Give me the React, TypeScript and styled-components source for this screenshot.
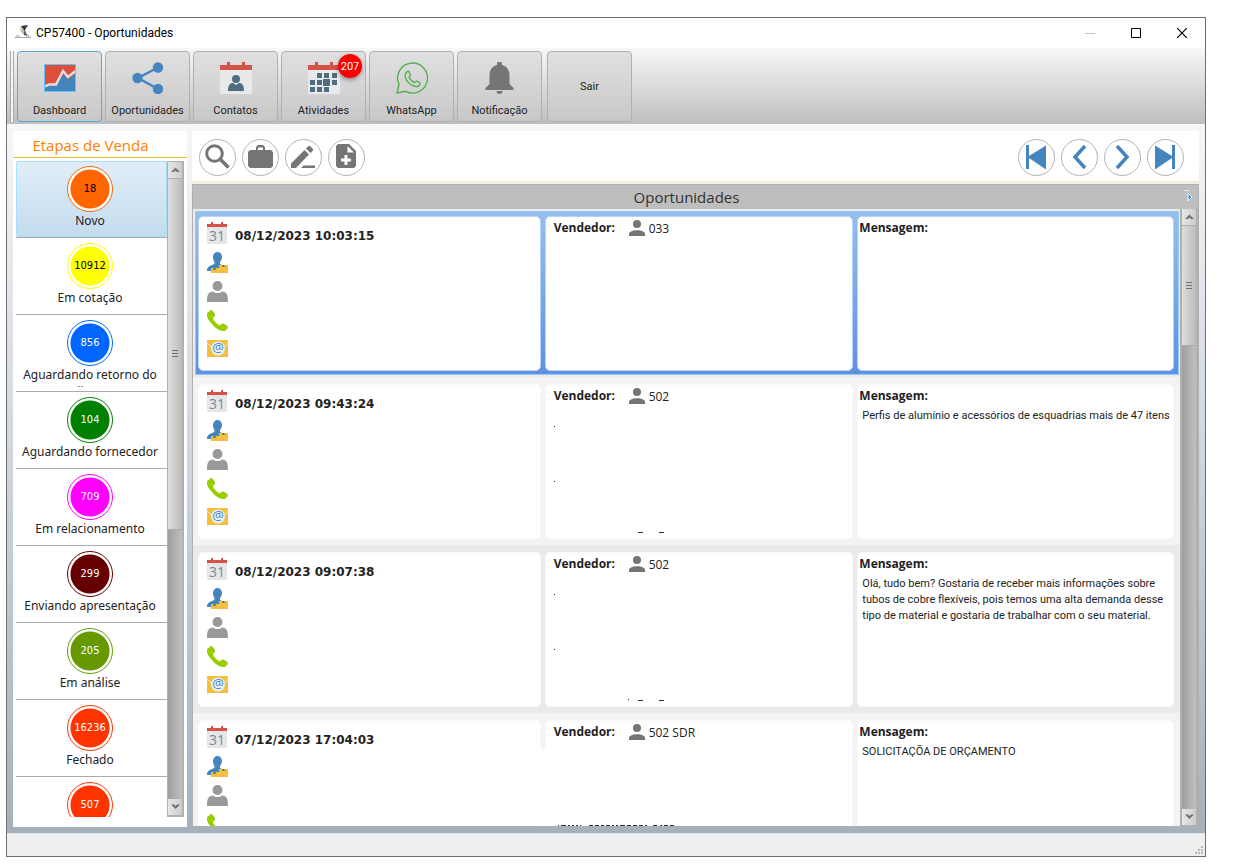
import React from "react";
import styled, { createGlobalStyle, css } from "styled-components";

const humanist = `"Open Sans", "Noto Sans", sans-serif`;
const compact = `Roboto, "Open Sans", sans-serif`;
const stageFont = `"Noto Sans", "DejaVu Sans Condensed", sans-serif`;

const GlobalStyle = createGlobalStyle`
  * { box-sizing: border-box; }
  body { margin: 0; background: #fff; font-family: ${humanist}; color: #222; overflow: hidden; }
  button { font: inherit; color: inherit; padding: 0; border: 0; background: none; }
  ul { list-style: none; margin: 0; padding: 0; }
  h1, h2, p { margin: 0; font-weight: 400; }
  svg { display: block; flex: none; }
`;

const Window = styled.div`
  margin: 17px 29px 9px 6px;
  height: calc(100vh - 26px);
  border: 1px solid #6e6e6e;
  display: flex;
  flex-direction: column;
`;

const TitleBar = styled.header`
  height: 30px;
  flex: none;
  display: flex;
  align-items: center;
  padding-left: 8px;
  gap: 5px;
  font-family: ${compact};
  font-size: 12px;
  color: #000;
`;

const WindowButtons = styled.div`
  margin-left: auto;
  display: flex;
`;

const WindowButton = styled.button`
  width: 46px;
  height: 30px;
  display: flex;
  align-items: center;
  justify-content: center;
`;

const ToolBar = styled.nav`
  height: 76px;
  flex: none;
  display: flex;
  gap: 3px;
  padding: 3px 3px 2px;
  background: linear-gradient(#f8f8f8, #bebebe);
`;

const Gripper = styled.div`
  width: 4px;
  border: solid #aaa;
  border-width: 0 1px;
  background: #f4f4f4;
`;

const ToolButton = styled.button<{ $active?: boolean; $apart?: boolean }>`
  position: relative;
  width: 85px;
  height: 71px;
  margin-left: ${(p) => (p.$apart ? 2 : 0)}px;
  border: 1px solid ${(p) => (p.$active ? "#5aa9dd" : "#b0b0b0")};
  border-radius: 4px;
  background: linear-gradient(#e0e0e0, #c8c8c8);
  display: flex;
  flex-direction: column;
  align-items: center;
  justify-content: ${(p) => (p.$apart ? "center" : "flex-start")};
  gap: 9px;
  padding-top: ${(p) => (p.$apart ? 0 : 10)}px;
  font-family: ${compact};
  font-size: 11px;
  line-height: 16px;
`;

const Badge = styled.span`
  position: absolute;
  top: 2px;
  right: 3px;
  width: 24px;
  height: 24px;
  border-radius: 50%;
  background: #f00;
  color: #fff;
  line-height: 25px;
  font-size: 11px;
  box-shadow: 0 2px 4px rgba(0, 0, 0, 0.35);
`;

const Workspace = styled.div`
  flex: 1;
  min-height: 0;
  display: flex;
  gap: 5px;
  padding: 7px 6px 6px;
  background: linear-gradient(#f5f6f8, #a4b1bc);
`;

const SideBar = styled.aside`
  width: 174px;
  flex: none;
  background: #fff;
  display: flex;
  flex-direction: column;
  padding-bottom: 10px;
`;

const SideTitle = styled.h2`
  height: 27px;
  padding-right: 19px;
  border-bottom: 1px solid #f6bf26;
  text-align: center;
  color: #ff8000;
  font-size: 15px;
  line-height: 29px;
`;

const SideBody = styled.div`
  flex: 1;
  min-height: 0;
  display: flex;
  padding: 3px 3px 0;
`;

const StageList = styled.ul`
  flex: 1;
  overflow: hidden;
`;

const StageItem = styled.li`
  border-bottom: 1px solid #aaa;
`;

const StageButton = styled.button<{ $selected?: boolean }>`
  width: 100%;
  height: 76px;
  padding: 4px 3px 0 0;
  display: flex;
  flex-direction: column;
  align-items: center;
  border: 1px solid transparent;
  ${(p) =>
    p.$selected &&
    css`
      border-color: #a6e0fa;
      border-radius: 2px;
      background: linear-gradient(#e0edf7, #c4dcef);
    `}
`;

const Ring = styled.span<{ $color: string; $dark?: boolean }>`
  width: 46px;
  height: 46px;
  flex: none;
  border-radius: 50%;
  border: 1px solid ${(p) => p.$color};
  background: radial-gradient(circle, ${(p) => p.$color} 19px, #fff 20px);
  color: ${(p) => (p.$dark ? "#000" : "#fff")};
  font-family: "DejaVu Sans Condensed", "DejaVu Sans", sans-serif;
  font-size: 11px;
  line-height: 44px;
`;

const StageLabel = styled.span`
  width: 140px;
  height: 21px;
  overflow: hidden;
  font-family: ${stageFont};
  font-size: 12px;
  line-height: 17px;
`;

const ScrollTrack = styled.div<{ $framed?: boolean }>`
  width: ${(p) => (p.$framed ? 17 : 18)}px;
  flex: none;
  display: flex;
  flex-direction: column;
  border: solid #b0b0b0;
  border-width: ${(p) => (p.$framed ? "1px 2px 1px 1px" : "0 2px")};
  background: linear-gradient(90deg, #9e9e9e, #c0c0c0);
`;

const ScrollButton = styled.button`
  height: 17px;
  flex: none;
  display: flex;
  align-items: center;
  justify-content: center;
  border-bottom: 1px solid #b0b0b0;
  background: linear-gradient(90deg, #e6e6e6, #cdcdcd);
`;

const ScrollThumb = styled.div<{ $share: number }>`
  flex: ${(p) => p.$share};
  display: flex;
  align-items: center;
  justify-content: center;
  border-bottom: 1px solid #aaa;
  background: linear-gradient(90deg, #dedede, #bcbcbc);
`;

const ScrollRest = styled.div<{ $share: number }>`
  flex: ${(p) => p.$share};
`;

const Main = styled.main`
  flex: 1;
  min-width: 0;
  display: flex;
  flex-direction: column;
`;

const ActionBar = styled.div`
  height: 51px;
  flex: none;
  display: flex;
  align-items: center;
  gap: 6px;
  padding: 2px 15px 0 7px;
  background: #fff;
  border-bottom: 1px solid #fbe6bd;
`;

const Pager = styled.div`
  display: flex;
  gap: 6px;
  margin-left: auto;
`;

const RoundButton = styled.button`
  width: 37px;
  height: 37px;
  display: flex;
  align-items: center;
  justify-content: center;
  border: 1px solid #b4b4b4;
  border-radius: 50%;
  background: #fff;
`;

const Grid = styled.section`
  flex: 1;
  min-height: 0;
  display: flex;
  flex-direction: column;
  margin-top: 2px;
  border: 1px solid #b0b0b0;
`;

const GridHead = styled.div`
  height: 24px;
  flex: none;
  position: relative;
  background: #bebebe;
`;

const GridTitle = styled.h1`
  font-size: 15px;
  line-height: 24px;
  text-align: center;
  padding-right: 18px;
  color: #333;
`;

const Expand = styled.button`
  position: absolute;
  right: 5px;
  top: 4px;
`;

const GridBody = styled.div`
  flex: 1;
  min-height: 0;
  display: flex;
`;

const Records = styled.ul`
  flex: 1;
  min-width: 0;
  overflow: hidden;
  background: #f3f3f3;
`;

const Record = styled.li`
  height: 168px;
  padding: 2px 1px 2px 2px;
  background: #f3f3f3;
  &:nth-child(odd) { background: #eaeaea; }
`;

const Cards = styled.div<{ $selected?: boolean }>`
  height: 164px;
  display: grid;
  grid-template-columns: 343fr 309fr 317fr;
  gap: 4px;
  padding: 4px 4px 3px 2px;
  border: 1px solid transparent;
  ${(p) =>
    p.$selected &&
    css`
      border-color: #8fd0fb;
      background: linear-gradient(#96bfee, #6090df);
    `}
`;

const Card = styled.div<{ $selected?: boolean }>`
  position: relative;
  min-width: 0;
  border-radius: 5px;
  background: #fff;
  border: 1px solid ${(p) => (p.$selected ? "#b5d4f8" : "#fafafa")};
`;

const ContactCard = styled(Card)`
  padding: 5px 0 0 8px;
  display: flex;
  flex-direction: column;
  gap: 8px;
`;

const DateLine = styled.div`
  display: flex;
  align-items: center;
  gap: 8px;
  height: 22px;
`;

const DateText = styled.span`
  padding-top: 6px;
  font-family: "DejaVu Sans", sans-serif;
  font-weight: 700;
  font-size: 12px;
`;

const SellerCard = styled(Card)`
  padding: 1px 0 0 8px;
`;

const SellerLine = styled.div`
  display: flex;
  align-items: center;
  height: 20px;
  font-size: 12px;
`;

const FieldName = styled.span`
  display: block;
  font-weight: 700;
  font-size: 12px;
  line-height: 22px;
`;

const SellerName = styled(FieldName)`
  width: 75px;
`;

const SellerId = styled.span`
  margin-left: 4px;
`;

const MessageCard = styled(Card)`
  padding: 0 0 0 1px;
`;

const Message = styled.p`
  padding: 1px 0 0 3px;
  font-family: ${compact};
  font-size: 11px;
  line-height: 16px;
`;

const Fragments = styled.svg`
  position: absolute;
  left: 0;
  top: 0;
`;

const Blank = styled.div`
  position: absolute;
  left: -8px;
  top: 28px;
  width: 16px;
  height: 76px;
  background: #fff;
`;

const StatusBar = styled.footer`
  height: 23px;
  flex: none;
  display: flex;
  justify-content: flex-end;
  align-items: flex-end;
  padding: 2px;
  background: #efefef;
  border-top: 1px solid #dfe3e6;
`;

const blue = "#4485bf";
const grey = "#757575";
const slate = "#4f6d80";
const red = "#d35346";

const LogoIcon = () => (
  <svg width="16" height="16" viewBox="0 0 16 16">
    <path d="M6 1l7-1-3 5 2 5z" fill="#2f3a44" />
    <path d="M5 1l1 6 4 4-1-6z" fill="#cdbb93" />
    <path d="M9 6l4 5-4-1z" fill="#555" />
    <path d="M0 12.500h16M1 11h4M11 11h4" stroke="#8b8b8b" strokeDasharray="1.500 .6" />
  </svg>
);

const DashboardIcon = () => (
  <svg width="32" height="32" viewBox="0 0 32 32">
    <path d="M.5 2.500h31v27H.5z" fill="#dd4f3b" />
    <path d="M.5 29.500v-4l4-2 7-1 8-10 5 5 7-7v19z" fill={blue} />
    <path d="M1 24.500l4-2h7l7-13.500 5 6 7.500-6" fill="none" stroke="#dedede" strokeWidth="2.500" />
    <path d="M.5 2.500h31v27H.5z" fill="none" stroke="#5cc8fa" />
  </svg>
);

const ShareIcon = () => (
  <svg width="32" height="32" viewBox="0 0 32 32">
    <path d="M26 5.500L6 16l20 11" fill="none" stroke={blue} strokeWidth="2.500" />
    <circle cx="26" cy="5.500" r="5.200" fill={blue} />
    <circle cx="5.500" cy="16" r="5.200" fill={blue} />
    <circle cx="26" cy="27" r="5.200" fill={blue} />
  </svg>
);

const ContactsIcon = () => (
  <svg width="32" height="32" viewBox="0 0 32 32">
    <path d="M0 8h32v24H0z" fill="#e9e9e9" />
    <path d="M0 3h7V0h3v3h12V0h3v3h7v5H0z" fill={red} />
    <circle cx="16" cy="17" r="4" fill={slate} />
    <path d="M8 29c0-6 2-8 5-8l3 2 3-2c3 0 5 2 5 8z" fill={slate} />
  </svg>
);

const ActivitiesIcon = () => (
  <svg width="32" height="32" viewBox="0 0 32 32">
    <path d="M0 8h32v24H0z" fill="#e9e9e9" />
    <path d="M0 3h7V0h3v3h12V0h3v3h7v5H0z" fill={red} />
    <path
      d="M9 11h5v5H9zM16 11h5v5h-5zM24 11h5v5h-5zM2 18h5v5H2zM9 18h5v5H9zM15 17h7v7h-7zM24 18h5v5h-5zM2 25h5v5H2zM9 25h5v5H9zM16 25h5v5h-5z"
      fill={slate}
    />
  </svg>
);

const WhatsIcon = () => (
  <svg width="32" height="32" viewBox="0 0 32 32" fill="none" stroke="#53b04b" strokeWidth="1.400" strokeLinejoin="round">
    <path d="M1 31l2-8.500A15 15 0 1 1 9.500 29.300z" />
    <path d="M12 9.200c.6 0 1 .2 1.300 1l1 2.700c.2.800-.2 1.300-1.300 2.500 1.400 2.600 3 4 5.600 5.100 1-1.200 1.500-1.700 2.300-1.300l2.500 1.300c.8.500.8 1 .5 1.800-.8 2-3 2.500-4.600 2.100-4.800-1.300-8.700-4.900-10-9.300-.5-2.200.400-5.300 2.700-5.900z" />
  </svg>
);

const BellIcon = () => (
  <svg width="32" height="32" viewBox="0 0 32 32" fill="#757575">
    <path d="M13 3V2a2.500 2.500 0 0 1 5 0v1C22.500 4 25.500 8 25.500 13v9l4 4v2h-28v-2l4-4v-9c0-5 3-9 7.500-10zM12.500 29h6a3 3 0 0 1-6 0z" />
  </svg>
);

const SearchIcon = () => (
  <svg width="26" height="26" viewBox="0 0 26 26" fill="none" stroke={grey}>
    <circle cx="9.500" cy="9.500" r="7.800" strokeWidth="3" />
    <path d="M15 15l8.500 8.500" strokeWidth="3.600" />
  </svg>
);

const CaseIcon = () => (
  <svg width="26" height="26" viewBox="0 0 26 26" fill={grey}>
    <path
      fillRule="evenodd"
      d="M2 6h6V3l2-2h5l2 2v3h6l2 2v14l-2 2H2l-2-2V8zM10 6h5V3.500h-5z"
    />
  </svg>
);

const PencilIcon = () => (
  <svg width="26" height="26" viewBox="0 0 26 26" fill={grey}>
    <path d="M0 19.500L13.500 6 18 10.500 5 24H0zM15 4.500l2.500-2.500h1.500l3 3v1.500L19.500 9zM10 24l2.500-2.500H24V24z" />
  </svg>
);

const FileAddIcon = () => (
  <svg width="26" height="26" viewBox="0 0 26 26">
    <path d="M4 0h11l7 7v15l-2 2H4l-2-2V2z" fill={grey} />
    <path d="M13.500 2v6.500H20zM10.500 11h3v3.500H17v3h-3.500V21h-3v-3.500H7v-3h3.500z" fill="#fff" />
  </svg>
);

const pagerShapes: Record<string, React.ReactNode> = {
  Primeiro: <path d="M2 1h3v11L22 1.500v24L5 14v11H2z" fill={blue} />,
  Anterior: <path d="M18 2L8 13l10 11" fill="none" stroke={blue} strokeWidth="3.500" />,
  "Próximo": <path d="M7 2l10 11L7 24" fill="none" stroke={blue} strokeWidth="3.500" />,
  "Último": <path d="M22 1h-3v11L2 1.500v24L19 14v11h3z" fill={blue} />,
};

const CalendarIcon = () => (
  <svg width="20" height="22" viewBox="0 0 20 22">
    <path d="M0 5h20v17H0z" fill="#e6e6e6" />
    <path d="M0 2h4V0h2v2h8V0h2v2h4v3H0z" fill={red} />
    <text x="10" y="19" textAnchor="middle" fontSize="14" fontFamily="Open Sans" fill="#7089a0">31</text>
  </svg>
);

const ClientIcon = () => (
  <svg width="21" height="21" viewBox="0 0 21 21">
    <path d="M6 5c0-3 2-5 4.500-5S15 2 15 5c0 2-1 4-2 5v2l4 2v5H0c0-4 2-5 7.500-7v-2C6.500 9 6 7 6 5z" fill={blue} />
    <path d="M12 13h9v8h-9zM4 16h8v5H4z" fill="#f4bf3d" />
    <path d="M15.500 13h2v2h-2zM6.500 16h2v2h-2z" fill={slate} />
  </svg>
);

const PersonIcon = () => (
  <svg width="21" height="21" viewBox="0 0 21 21" fill="#999">
    <circle cx="10.500" cy="5" r="5" />
    <path d="M0 21c0-7 1-10 6-10.500 2.500 2 6.500 2 9 0 5 .5 6 3.500 6 10.500z" />
  </svg>
);

const PhoneIcon = () => (
  <svg width="21" height="21" viewBox="0 0 21 21">
    <path d="M0 3l4-3c1.500 0 3.500 2.500 4 4.500.3 1.500-.8 2-2.300 3.500 1 3 4 6 7 7.500 1.500-1.500 2.300-2.300 3.500-2 2 .8 4.300 2 4.800 3.800 0 1-2 2.700-3 3.700-5 .5-10.500-3-14-8C1 9.500-.8 6 0 3z" fill="#98ce00" />
  </svg>
);

const MailIcon = () => (
  <svg width="21" height="19" viewBox="0 0 21 19">
    <path d="M0 1h21v17H0z" fill="#f4bf3d" />
    <path d="M0 4l4 4 3-4h8l3 4 3-4" fill="none" stroke="#fbe7b5" />
    <circle cx="11" cy="9.500" r="7" fill="#e9eef2" />
    <text x="11" y="13" textAnchor="middle" fontSize="13" fontFamily="Open Sans" fill="#3f86c6">@</text>
  </svg>
);

const SellerIcon = () => (
  <svg width="16" height="16" viewBox="0 0 16 16" fill="#757575">
    <circle cx="8" cy="4" r="4" />
    <path d="M0 16v-2c0-5 16-5 16 0v2z" />
  </svg>
);

const Chevron = ({ down }: { down?: boolean }) => (
  <svg width="9" height="6" viewBox="0 0 9 6">
    <path d={down ? "M0 .5h3l1.500 1.500L6 .5h3L4.500 5z" : "M0 5h3l1.500-1.500L6 5h3L4.500 .5z"} fill="#707070" />
  </svg>
);

const ScrollBar = ({ thumb, rest, framed }: { thumb: number; rest: number; framed?: boolean }) => (
  <ScrollTrack $framed={framed}>
    <ScrollButton aria-label="Rolar para cima"><Chevron /></ScrollButton>
    <ScrollThumb $share={thumb}>
      <svg width="6" height="8" viewBox="0 0 6 8">
        <path d="M0 .5h6M0 3.500h6M0 6.500h6" stroke="#707070" />
      </svg>
    </ScrollThumb>
    <ScrollRest $share={rest} />
    <ScrollButton aria-label="Rolar para baixo"><Chevron down /></ScrollButton>
  </ScrollTrack>
);

const tools = [
  { label: "Dashboard", icon: <DashboardIcon />, active: true },
  { label: "Oportunidades", icon: <ShareIcon /> },
  { label: "Contatos", icon: <ContactsIcon /> },
  { label: "Atividades", icon: <ActivitiesIcon />, badge: "207" },
  { label: "WhatsApp", icon: <WhatsIcon /> },
  { label: "Notificação", icon: <BellIcon /> },
];

const stages = [
  { count: "18", label: "Novo", color: "#ff6600", dark: true },
  { count: "10912", label: "Em cotação", color: "#ffff00", dark: true },
  { count: "856", label: "Aguardando retorno do cliente", color: "#0066ff" },
  { count: "104", label: "Aguardando fornecedor", color: "#008000" },
  { count: "709", label: "Em relacionamento", color: "#ff00ff" },
  { count: "299", label: "Enviando apresentação", color: "#660000" },
  { count: "205", label: "Em análise", color: "#669900" },
  { count: "16236", label: "Fechado", color: "#ff3300" },
  { count: "507", label: "", color: "#ff3300" },
];

const records = [
  { date: "08/12/2023 10:03:15", seller: "033", message: "", marks: "" },
  {
    date: "08/12/2023 09:43:24",
    seller: "502",
    message: "Perfis de alumínio e acessórios de esquadrias mais de 47 itens",
    marks: "M8 41.500h1M8 96.500h1M92 147.500h5M113 147.500h5",
  },
  {
    date: "08/12/2023 09:07:38",
    seller: "502",
    message:
      "Olá, tudo bem? Gostaria de receber mais informações sobre tubos de cobre flexíveis, pois temos uma alta demanda desse tipo de material e gostaria de trabalhar com o seu material.",
    marks: "M8 41.500h1M8 96.500h1M82 146.500h1M92 147.500h5M113 147.500h5",
  },
  {
    date: "07/12/2023 17:04:03",
    seller: "502 SDR",
    message: "SOLICITAÇÕA DE ORÇAMENTO",
    marks:
      "M12 104.500h1M15 104.500h5M22 104.500h2M26 104.500h2M30 104.500h2M34 104.500h1M43 104.500h4M49 104.500h4M55 104.500h3M60 104.500h4M66 104.500h2M70 104.500h2M74 104.500h5M81 104.500h4M87 104.500h4M93 104.500h4M99 104.500h2M107 104.500h4M114 104.500h2M118 104.500h4M124 104.500h4",
    cut: true,
  },
];

export default function App() {
  return (
    <>
      <GlobalStyle />
      <Window>
        <TitleBar>
          <LogoIcon />
          <span>CP57400 - Oportunidades</span>
          <WindowButtons>
            <WindowButton aria-label="Minimizar">
              <svg width="10" height="10"><path d="M0 5.500h10" stroke="#c4c4c4" /></svg>
            </WindowButton>
            <WindowButton aria-label="Maximizar">
              <svg width="10" height="10"><path d="M.5 .5h9v9h-9z" fill="none" stroke="#000" /></svg>
            </WindowButton>
            <WindowButton aria-label="Fechar">
              <svg width="10" height="10"><path d="M0 0l10 10M10 0L0 10" stroke="#000" strokeWidth="1.200" /></svg>
            </WindowButton>
          </WindowButtons>
        </TitleBar>

        <ToolBar>
          <Gripper />
          {tools.map((t) => (
            <ToolButton key={t.label} $active={t.active}>
              {t.icon}
              {t.label}
              {t.badge && <Badge>{t.badge}</Badge>}
            </ToolButton>
          ))}
          <ToolButton $apart>Sair</ToolButton>
        </ToolBar>

        <Workspace>
          <SideBar>
            <SideTitle>Etapas de Venda</SideTitle>
            <SideBody>
              <StageList>
                {stages.map((s, i) => (
                  <StageItem key={s.count}>
                    <StageButton $selected={i === 0}>
                      <Ring $color={s.color} $dark={s.dark}>{s.count}</Ring>
                      <StageLabel>{s.label}</StageLabel>
                    </StageButton>
                  </StageItem>
                ))}
              </StageList>
              <ScrollBar thumb={352} rest={270} framed />
            </SideBody>
          </SideBar>

          <Main>
            <ActionBar>
              <RoundButton aria-label="Pesquisar"><SearchIcon /></RoundButton>
              <RoundButton aria-label="Negócio"><CaseIcon /></RoundButton>
              <RoundButton aria-label="Editar"><PencilIcon /></RoundButton>
              <RoundButton aria-label="Novo"><FileAddIcon /></RoundButton>
              <Pager>
                {Object.entries(pagerShapes).map(([name, shape]) => (
                  <RoundButton key={name} aria-label={name}>
                    <svg width="26" height="26" viewBox="0 0 26 26">{shape}</svg>
                  </RoundButton>
                ))}
              </Pager>
            </ActionBar>

            <Grid>
              <GridHead>
                <GridTitle>Oportunidades</GridTitle>
                <Expand aria-label="Expandir">
                  <svg width="9" height="12" viewBox="0 0 9 12">
                    <path d="M1 1.500h4" stroke="#fff" strokeDasharray="2 1" />
                    <path d="M4 4l4 4-4 4z" fill="#1f9be8" stroke="#fff" />
                  </svg>
                </Expand>
              </GridHead>
              <GridBody>
                <Records>
                  {records.map((r, i) => (
                    <Record key={r.date}>
                      <Cards $selected={i === 0}>
                        <ContactCard $selected={i === 0}>
                          <DateLine>
                            <CalendarIcon />
                            <DateText>{r.date}</DateText>
                          </DateLine>
                          <ClientIcon />
                          <PersonIcon />
                          <PhoneIcon />
                          {!r.cut && <MailIcon />}
                        </ContactCard>
                        <SellerCard $selected={i === 0}>
                          {r.cut && <Blank />}
                          <SellerLine>
                            <SellerName>Vendedor:</SellerName>
                            <SellerIcon />
                            <SellerId>{r.seller}</SellerId>
                          </SellerLine>
                          {r.marks && (
                            <Fragments width="200" height="150">
                              <path d={r.marks} stroke="#333" />
                            </Fragments>
                          )}
                        </SellerCard>
                        <MessageCard $selected={i === 0}>
                          <FieldName>Mensagem:</FieldName>
                          <Message>{r.message}</Message>
                        </MessageCard>
                      </Cards>
                    </Record>
                  ))}
                </Records>
                <ScrollBar thumb={119} rest={462} />
              </GridBody>
            </Grid>
          </Main>
        </Workspace>

        <StatusBar>
          <svg width="8" height="8" fill="#b8b8b8">
            <path d="M6 0h2v2H6zM3 3h2v2H3zM6 3h2v2H6zM0 6h2v2H0zM3 6h2v2H3zM6 6h2v2H6z" />
          </svg>
        </StatusBar>
      </Window>
    </>
  );
}
